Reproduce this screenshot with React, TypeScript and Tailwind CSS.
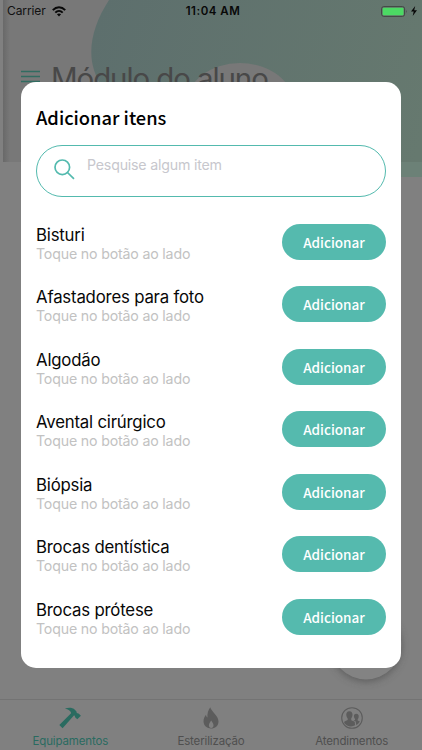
import React from "react";

const items = ["Bisturi", "Afastadores para foto", "Algodão", "Avental cirúrgico", "Biópsia", "Brocas dentística", "Brocas prótese"];

function StatusBar() {
  return (
    <div className="relative grid h-[22px] grid-cols-3 items-center pl-[7px] pr-[5px] font-['Inter',sans-serif] whitespace-nowrap">
      <div className="flex items-center gap-[6px]">
        <span className="text-[12px] leading-[22px] tracking-[-0.1px] text-[#111]">Carrier</span>
        <svg width="14" height="11" viewBox="0 0 14 11" fill="none" stroke="#080808">
          <path d="M.8 4.1C4.4.3 9.600.3 13.200 4.100" strokeWidth="2" />
          <path d="M3.300 6.600C5.400 4.500 8.600 4.500 10.700 6.600" strokeWidth="1.900" />
          <path d="M7 10.500 4.900 8.300Q7 6.700 9.100 8.300Z" fill="#080808" stroke="none" />
        </svg>
      </div>
      <span className="pl-[2px] text-center text-[11.5px] font-semibold leading-[22px] tracking-[0.5px] text-[#080808]">11:04 AM</span>
      <div className="flex items-center justify-end gap-[3px]">
        <svg width="27" height="11" viewBox="0 0 27 11">
          <rect x=".6" y=".6" width="23" height="9.800" rx="2.200" fill="none" stroke="#444" />
          <rect x="1.700" y="1.700" width="20.800" height="7.600" rx="1" fill="#4cd964" />
          <path d="M25 3.800q1.300 1.700 0 3.400z" fill="#444" />
        </svg>
        <svg width="6" height="10" viewBox="0 0 6 10"><path d="M4.200 0 0 5.600h2.700L1.700 10 6 4.200H3.200z" fill="#080808" /></svg>
      </div>
    </div>
  );
}

function Backdrop() {
  return (
    <svg className="absolute inset-0" width="422" height="750">
      <defs>
        <linearGradient id="wave" x1="90" y1="40" x2="422" y2="140" gradientUnits="userSpaceOnUse">
          <stop stopColor="#5d6f6d" /><stop offset="1" stopColor="#66796f" />
        </linearGradient>
        <linearGradient id="edge"><stop stopColor="#696969" /><stop offset="1" stopColor="#787878" /></linearGradient>
        <filter id="shadow" x="-30%" y="-30%" width="160%" height="160%"><feGaussianBlur stdDeviation="4" /></filter>
      </defs>
      <rect width="422" height="750" fill="#808080" />
      <rect x="3" width="419" height="162" fill="#787878" />
      <rect x="3" width="7" height="162" fill="url(#edge)" />
      <path d="M109 0C94 23 87 48 94 70C100 90 120 120 160 130L422 177V0Z" fill="url(#wave)" />
      <ellipse cx="240" cy="105" rx="54" ry="42" fill="#787878" />
      <path d="M400 162h22v15h-22z" fill="#6c8177" />
      <path d="M21 71.500H40M21 76.500H40M21 81.500H40" stroke="#316c61" strokeWidth="1.300" />
      <circle cx="366" cy="646" r="35" fill="#404040" opacity=".6" filter="url(#shadow)" />
      <circle cx="366" cy="644" r="35.500" fill="#838383" />
    </svg>
  );
}

const tabs = [
  { label: "Equipamentos", color: "text-[#2a6b60]" },
  { label: "Esterilização", color: "text-[#4f4f4f]" },
  { label: "Atendimentos", color: "text-[#4f4f4f]" },
];

const tabIcons = [
  <svg width="22" height="22" viewBox="0 0 22 22" fill="#2a6b60"><path d="M6 1.500C9.500.2 13.200.3 15.300 2.200L17.300 4.300C17.800 4.900 17.500 5.500 17.900 6C18.500 6.600 19.300 6.100 19.900 6.700L21.900 8.700L18.300 12.300L16.300 10.400C15.700 9.800 16.100 8.900 15.400 8.600L14.900 8.500L3.600 21.200L.3 18.100L12.100 6.200C11.800 3.700 9 2.500 6 1.500Z" /></svg>,
  <svg width="16" height="22" viewBox="0 0 16 22" fill="#5c5c5c"><path fillRule="evenodd" d="M7.300.3C8 4.400 15.500 8.600 15.500 14.400C15.500 18.800 12 21.500 8 21.500C4 21.500.5 18.800.5 14.300C.5 11.500 1.800 9.300 3 7.800C3.200 9.200 3.600 10 4.500 10.600C4 6.900 5.200 3 7.300.3ZM8.300 13.500C7.300 15 5.900 16.300 5.900 18.300C5.900 20 6.900 20.900 8.200 20.900C9.600 20.900 10.500 20 10.500 18.300C10.500 16.300 9 15.200 8.300 13.500Z" /></svg>,
  <svg width="22" height="22" viewBox="0 0 22 22" fill="#5c5c5c"><circle cx="11" cy="11" r="10.300" fill="none" stroke="#5c5c5c" strokeWidth="1.100" /><path d="M8.400 4.200C10.800 4.200 11.700 6 11.500 8.100C11.400 9.600 10.800 10.700 10.200 11.400L10.300 13.200L13.700 14.800L14.100 18.300C10.200 20.600 5.500 19.200 3.100 15.700L3.500 14.500L6.700 13.100V11.400C6 10.600 5.400 9.500 5.300 8.100C5.100 6 6 4.200 8.400 4.200Z" /><path d="M15.300 6.700C17.200 6.700 17.900 8.100 17.700 9.700C17.600 10.900 17.200 11.600 16.700 12.200V13.500L18.900 14.600Q17.600 17 15.200 18L14.700 14.400L12.500 13.200L14 12.900V12C13.300 11.300 13 10.600 12.900 9.600C12.800 8 13.500 6.700 15.300 6.700Z" /></svg>,
];

function TabBar() {
  return (
    <nav className="relative grid h-[51px] grid-cols-3 border-t border-[#737373] bg-[#808080] pt-[7px] font-['Inter',sans-serif] whitespace-nowrap">
      {tabs.map((tab, i) => (
        <div key={tab.label} className="flex flex-col items-center">
          {tabIcons[i]}
          <span className={"mt-px text-[11.5px] leading-[22px] tracking-[-0.15px] " + tab.color}>{tab.label}</span>
        </div>
      ))}
    </nav>
  );
}

export default function App() {
  return (
    <div className="relative flex h-[750px] w-[422px] flex-col overflow-hidden">
      <Backdrop />
      <StatusBar />
      <header className="relative h-[60px] pl-[51px] pt-[36px] font-['Inter',sans-serif] text-[29.5px] leading-[40px] tracking-[-1.1px] whitespace-nowrap text-[#484848]">Módulo do aluno</header>
      <main className="relative mx-[21px] h-[586px] w-[380px] shrink-0 rounded-[15px] bg-white px-[15px] pt-[20px] font-['Inter',sans-serif] whitespace-nowrap">
        <h1 className="h-[43px] font-['Noto_Sans_CJK_SC',sans-serif] text-[18.3px] font-medium leading-[30px] text-black">Adicionar itens</h1>
        <div className="flex h-[52px] w-[350px] rounded-full border border-[#53baae] pl-[17px]">
          <svg className="mt-[13px]" width="22" height="22" viewBox="0 0 22 22" fill="none" stroke="#53baae" strokeWidth="1.700"><circle cx="8.300" cy="8.300" r="7.300" /><path d="m13.500 13.500 6.500 6.300" /></svg>
          <span className="ml-[11px] mt-[9px] text-[14.2px] leading-[20px] tracking-[-0.2px] text-[#c7c7cd]">Pesquise algum item</span>
        </div>
        <ul className="mt-[26.9px]">
          {items.map((name) => (
            <li key={name} className="flex h-[62.5px] items-start justify-between">
              <div className="flex flex-col">
                <span className="text-[16.8px] leading-[22px] tracking-[-0.2px] text-[#080808]">{name}</span>
                <span className="text-[14.2px] leading-[16px] tracking-[-0.18px] text-[#c2c2c2]">Toque no botão ao lado</span>
              </div>
              <button className="flex h-[36px] w-[104px] items-center justify-center rounded-full bg-[#55baae] font-['Noto_Sans_CJK_SC',sans-serif] text-[13.5px] font-medium leading-[36px] text-white">Adicionar</button>
            </li>
          ))}
        </ul>
      </main>
      <div className="flex-1" />
      <TabBar />
    </div>
  );
}
